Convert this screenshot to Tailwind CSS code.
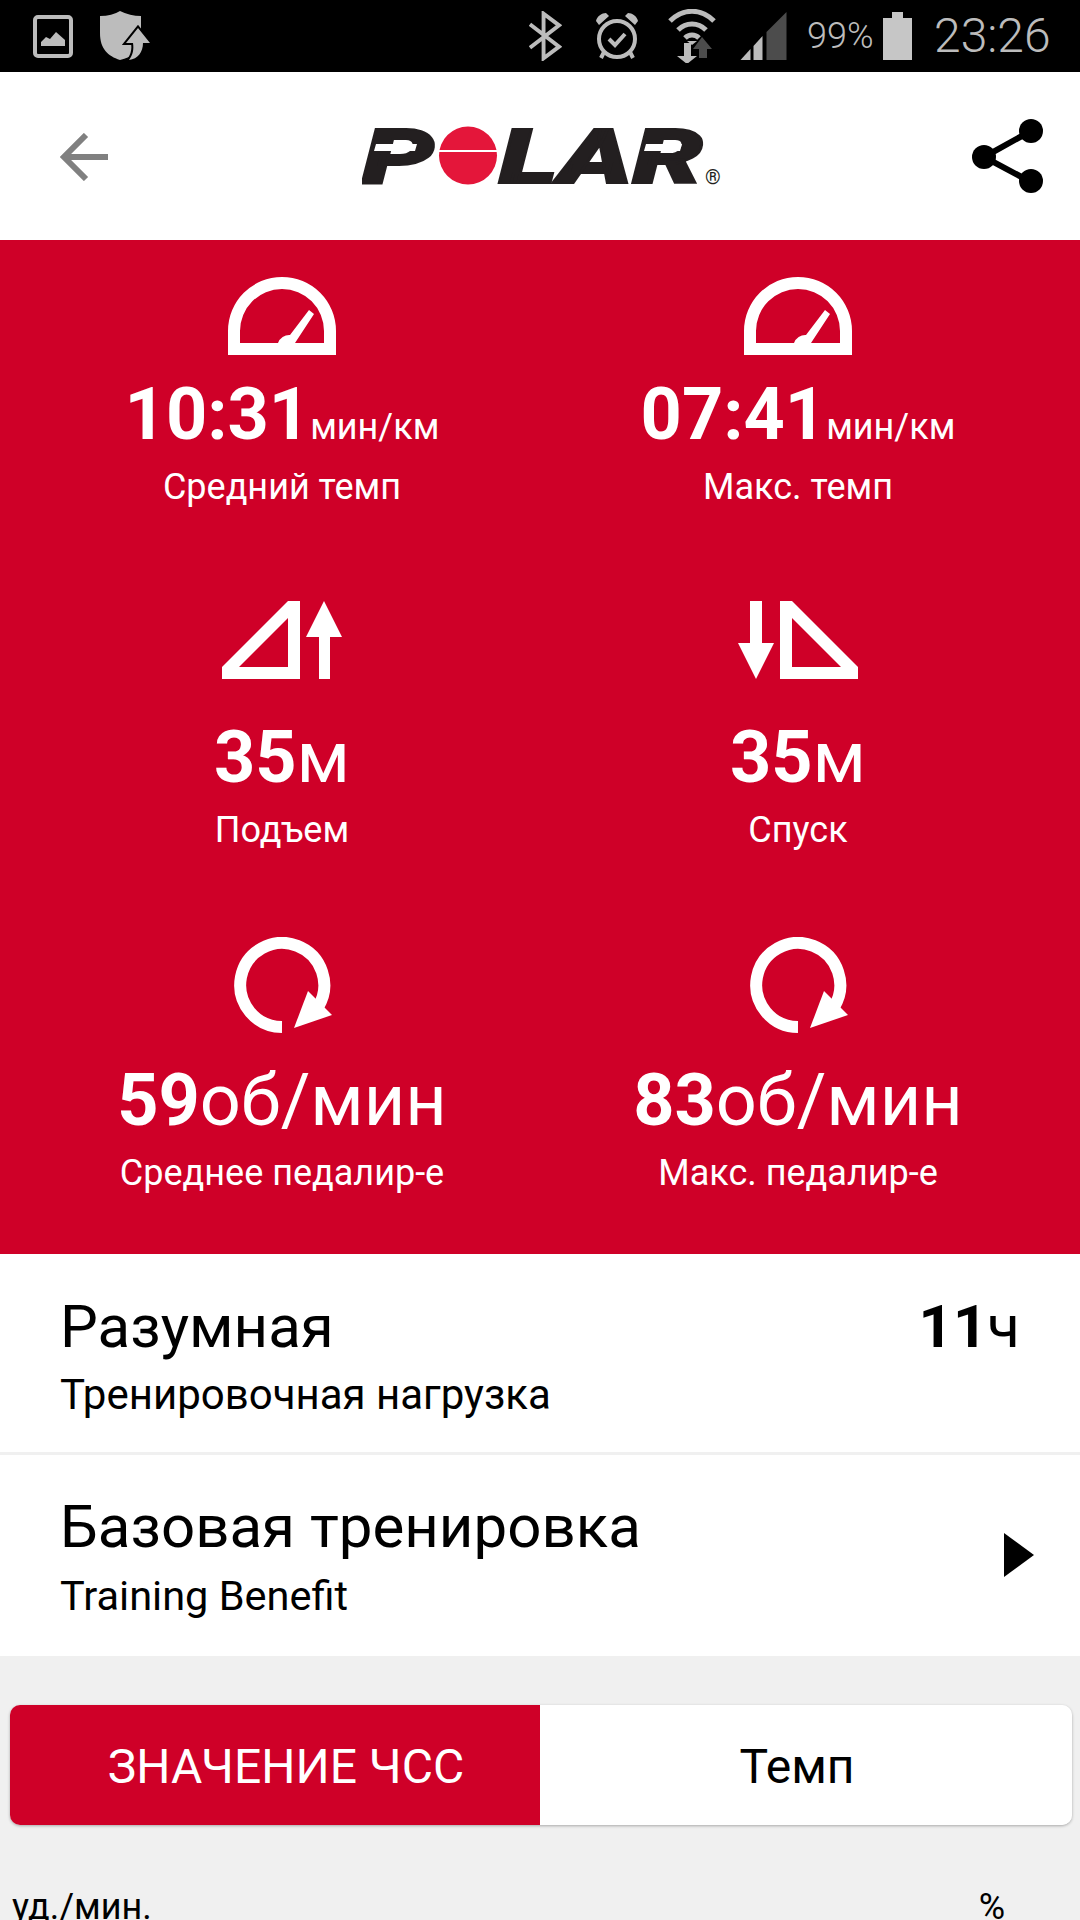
<!DOCTYPE html>
<html lang="ru">
<head>
  <meta charset="UTF-8">
  <meta name="viewport" content="width=device-width, initial-scale=1.0">
  <title>Polar</title>
  <script src="https://cdn.jsdelivr.net/npm/@tailwindcss/browser@4"></script>
</head>
<body class="bg-[#f0f0f0] font-['Roboto',sans-serif]">
  <div class="w-[1080px] h-[1920px] overflow-hidden relative">

    <!-- status bar -->
    <div class="h-[72px] bg-black flex items-center text-[#bcbcbc]">
      <svg class="ml-[33px] w-[40px] h-[43px]" viewBox="0 0 40 43">
        <rect x="2" y="2" width="36" height="39" rx="3" fill="none" stroke="#bcbcbc" stroke-width="4"/>
        <path d="M8 31v-4l5-5 4 2 6-7 9 8v6z" fill="#bcbcbc"/>
      </svg>
      <svg class="ml-[27px] w-[50px] h-[50px]" viewBox="0 0 50 50">
        <path d="M0 5Q12 5 20 0 30 5 41 5V30C41 40 32 46 20 49 8 45 0 38 0 22z" fill="#bcbcbc"/>
        <path d="M38 17 50 32H43C43 41 38 48 29 49 33 44 34 38 33 32H26z" fill="#bcbcbc" stroke="#000" stroke-width="4" paint-order="stroke"/>
      </svg>

      <svg class="ml-[379px] w-[33px] h-[50px]" viewBox="0 0 34 50" fill="none" stroke="#bcbcbc" stroke-width="4">
        <path d="M1 13 31 36 15 48V2l16 12L1 37"/>
      </svg>
      <svg class="ml-[33px] w-[44px] h-[48px]" viewBox="0 0 44 48">
        <circle cx="22" cy="27" r="18" fill="none" stroke="#bcbcbc" stroke-width="4"/>
        <path d="M14 27l6 6 10-11" fill="none" stroke="#bcbcbc" stroke-width="4"/>
        <path d="M1 9c1-5 6-8 10-8l3 3L4 13zM43 9c-1-5-6-8-10-8l-3 3 10 9z" fill="#bcbcbc"/>
        <path d="M9 40l-3 6M35 40l3 6" stroke="#bcbcbc" stroke-width="4"/>
      </svg>
      <svg class="ml-[28px] w-[50px] h-[54px]" viewBox="0 0 50 54">
        <path d="M3 12c13-13 31-13 44 0M11 21c8-8 20-8 28 0M18 29c4-4 10-4 14 0" fill="none" stroke="#bcbcbc" stroke-width="5"/>
        <path d="M25 36l-5-4h10zM17 34h7v13h6l-10 8-10-8h7z" fill="#bcbcbc"/>
        <path d="M26 40l9-12 10 12h-5v9h-8v-9z" fill="#4c4c4c"/>
      </svg>
      <svg class="ml-[23px] w-[48px] h-[48px]" viewBox="0 0 47 48">
        <path d="M0 48l10-11v11z" fill="#bcbcbc"/>
        <path d="M13 48V34l9-10v24z" fill="#bcbcbc"/>
        <path d="M26 48V20L46 0v48z" fill="#4c4c4c"/>
      </svg>
      <span class="ml-[19px] w-[64px] text-[36px] font-light leading-none whitespace-nowrap">99%</span>
      <svg class="ml-[12px] w-[29px] h-[48px]" viewBox="0 0 29 48">
        <path d="M9 0h11v6h9v42H0V6h9z" fill="#c6c6c6"/>
      </svg>
      <span class="ml-[22px] text-[48px] font-light leading-none">23:26</span>
    </div>

    <!-- header -->
    <header class="h-[168px] bg-white flex items-center relative">
      <svg class="absolute left-[60px] top-[61px] w-[48px] h-[48px]" viewBox="0 0 48 48" fill="none" stroke="#808080" stroke-width="6">
        <path d="M48 24H3M26 2 4 24l22 22"/>
      </svg>

      <!-- wordmark, slits are painted over the live text -->
      <svg class="absolute left-[362px] top-[30px] w-[370px] h-[110px]" viewBox="0 0 370 110">
        <text x="0" y="81" font-family="Roboto" font-weight="900" font-style="italic" font-size="76" textLength="72" lengthAdjust="spacingAndGlyphs" fill="#231f20" stroke="#231f20" stroke-width="2">P</text>
        <circle cx="106" cy="53.500" r="29" fill="#e4163a"/>
        <text x="137" y="81" font-family="Roboto" font-weight="900" font-style="italic" font-size="76" textLength="204" lengthAdjust="spacingAndGlyphs" fill="#231f20" stroke="#231f20" stroke-width="2">LAR</text>
        <rect x="77" y="48" width="58" height="2" fill="#fff"/>
        <path d="M14 42H55L53 49H12zM284 42H320L318 49H282z" fill="#fff"/>
        <text x="343" y="82" font-family="Roboto" font-size="20" fill="#231f20">®</text>
      </svg>

      <svg class="absolute left-[971px] top-[46px] w-[72px] h-[76px]" viewBox="0 0 72 76">
        <path d="M60 13 13 39l47 25" fill="none" stroke="#000" stroke-width="6"/>
        <circle cx="60" cy="13" r="12"/>
        <circle cx="13" cy="39" r="12"/>
        <circle cx="60" cy="63" r="12"/>
      </svg>
    </header>

    <!-- workout stats -->
    <section class="h-[1014px] bg-[#cf0028] text-white grid grid-cols-2 auto-rows-[270px] gap-y-[73px] px-[24px] text-center">

      <div class="flex flex-col items-center">
        <div class="h-[139px]">
          <svg class="mt-[37px] w-[108px] h-[78px]" viewBox="0 0 108 78">
            <path fill="#fff" fill-rule="evenodd" d="M0 78V54a54 54 0 0 1 108 0v24zM12 66H50a12 12 0 0 1 12-8L81 33l5 4L67 66H96V54a42 42 0 0 0-84 0z"/>
          </svg>
        </div>
        <div class="whitespace-nowrap leading-none"><span class="text-[72px] font-bold">10:31</span><span class="text-[36px]">мин/км</span></div>
        <div class="mt-[16px] text-[36px] leading-[40px]">Средний темп</div>
      </div>

      <div class="flex flex-col items-center">
        <div class="h-[139px]">
          <svg class="mt-[37px] w-[108px] h-[78px]" viewBox="0 0 108 78">
            <path fill="#fff" fill-rule="evenodd" d="M0 78V54a54 54 0 0 1 108 0v24zM12 66H50a12 12 0 0 1 12-8L81 33l5 4L67 66H96V54a42 42 0 0 0-84 0z"/>
          </svg>
        </div>
        <div class="whitespace-nowrap leading-none"><span class="text-[72px] font-bold">07:41</span><span class="text-[36px]">мин/км</span></div>
        <div class="mt-[16px] text-[36px] leading-[40px]">Макс. темп</div>
      </div>

      <div class="flex flex-col items-center">
        <div class="h-[139px]">
          <svg class="mt-[18px] w-[120px] h-[78px]" viewBox="0 0 120 78">
            <path fill="#fff" fill-rule="evenodd" d="M66 0H78V78H0V66zM66 17 17 66H66z"/>
            <path fill="#fff" d="M102 0l18 36h-12v42H97V36H84z"/>
          </svg>
        </div>
        <div class="whitespace-nowrap leading-none"><span class="text-[72px] font-bold">35</span><span class="text-[72px]">м</span></div>
        <div class="mt-[16px] text-[36px] leading-[40px]">Подъем</div>
      </div>

      <div class="flex flex-col items-center">
        <div class="h-[139px]">
          <svg class="mt-[18px] w-[120px] h-[78px]" viewBox="0 0 120 78">
            <path fill="#fff" d="M12 0H24V42H36L18 78 0 42H12z"/>
            <path fill="#fff" fill-rule="evenodd" d="M42 0H54L120 66V78H42zM54 17V66H103z"/>
          </svg>
        </div>
        <div class="whitespace-nowrap leading-none"><span class="text-[72px] font-bold">35</span><span class="text-[72px]">м</span></div>
        <div class="mt-[16px] text-[36px] leading-[40px]">Спуск</div>
      </div>

      <div class="flex flex-col items-center">
        <div class="h-[139px]">
          <svg class="mt-[11px] w-[100px] h-[96px]" viewBox="-2 0 100 96">
            <path d="M48 90A42 42 0 1 1 84 70" fill="none" stroke="#fff" stroke-width="12"/>
            <path d="M74 54 98 78 60 91z" fill="#fff"/>
          </svg>
        </div>
        <div class="whitespace-nowrap leading-none"><span class="text-[72px] font-bold">59</span><span class="text-[72px]">об/мин</span></div>
        <div class="mt-[16px] text-[36px] leading-[40px]">Среднее педалир-е</div>
      </div>

      <div class="flex flex-col items-center">
        <div class="h-[139px]">
          <svg class="mt-[11px] w-[100px] h-[96px]" viewBox="-2 0 100 96">
            <path d="M48 90A42 42 0 1 1 84 70" fill="none" stroke="#fff" stroke-width="12"/>
            <path d="M74 54 98 78 60 91z" fill="#fff"/>
          </svg>
        </div>
        <div class="whitespace-nowrap leading-none"><span class="text-[72px] font-bold">83</span><span class="text-[72px]">об/мин</span></div>
        <div class="mt-[16px] text-[36px] leading-[40px]">Макс. педалир-е</div>
      </div>
    </section>

    <!-- training load -->
    <div class="h-[201px] bg-white pl-[60px] pr-[60px] pt-[40px] flex justify-between border-b-[3px] border-[#f0f0f0] text-black">
      <div>
        <div class="text-[60px] leading-[66px]">Разумная</div>
        <div class="text-[42px] leading-[46px] mt-[12px]">Тренировочная нагрузка</div>
      </div>
      <div class="leading-[66px] whitespace-nowrap"><span class="text-[60px] font-bold">11</span><span class="text-[60px]">ч</span></div>
    </div>

    <!-- training benefit -->
    <div class="h-[201px] bg-white pl-[60px] pr-[46px] pt-[39px] flex justify-between items-start text-black">
      <div>
        <div class="text-[60px] leading-[66px]">Базовая тренировка</div>
        <div class="text-[41.500px] leading-[46px] mt-[13px]">Training Benefit</div>
      </div>
      <svg class="mt-[39px] w-[30px] h-[44px]" viewBox="0 0 30 44"><path d="M0 0 30 22 0 44z"/></svg>
    </div>

    <!-- chart mode tabs -->
    <div class="mt-[49px] ml-[10px] w-[1062px] h-[120px] flex rounded-[10px] shadow-[0_1px_3px_rgba(0,0,0,0.3)] overflow-hidden text-[48px]">
      <div class="w-[530px] bg-[#cf0028] text-white flex items-center justify-center pl-[22px] pt-[4px]">ЗНАЧЕНИЕ ЧСС</div>
      <div class="flex-1 bg-white text-black flex items-center justify-center pr-[18px] pt-[4px]">Темп</div>
    </div>

    <!-- chart axis titles -->
    <div class="mt-[60px] pl-[12px] pr-[75px] flex justify-between text-[36px] leading-[44px] text-black">
      <span>уд./мин.</span>
      <span>%</span>
    </div>
  </div>
</body>
</html>
